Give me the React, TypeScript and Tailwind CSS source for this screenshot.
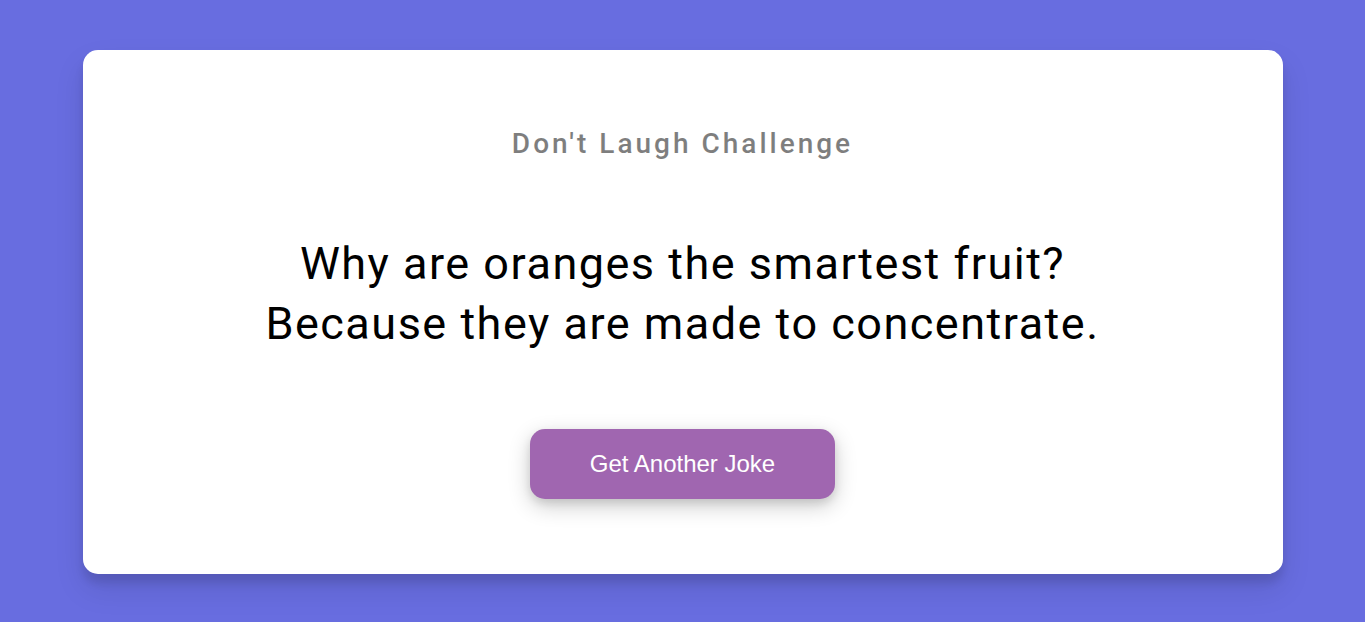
export default function App() {
  return (
    <div className="flex min-h-screen items-center justify-center bg-[#686de0] pt-[2px] font-['Roboto',sans-serif]">
      <div className="w-[1200px] rounded-[15px] bg-white px-[30px] py-[75px] text-center shadow-[0_15px_30px_rgba(0,0,0,0.1),0_9px_9px_rgba(0,0,0,0.1)]">
        <h3 className="m-0 text-[28px] leading-[38px] font-medium tracking-[3px] text-black opacity-50">
          Don't Laugh Challenge
        </h3>
        <div className="mx-auto mt-[71px] mb-[75px] text-[45px] leading-[60px] tracking-[1.5px] text-black">
          <div>Why are oranges the smartest fruit?</div>
          <div>Because they are made to concentrate.</div>
        </div>
        <button className="rounded-[15px] bg-[#a066b0] px-[60px] py-[21px] font-['Liberation_Sans',Arial,sans-serif] text-[24px] leading-[28px] text-white shadow-[0_7px_22px_rgba(0,0,0,0.2),0_4px_9px_rgba(0,0,0,0.1)]">
          Get Another Joke
        </button>
      </div>
    </div>
  );
}
